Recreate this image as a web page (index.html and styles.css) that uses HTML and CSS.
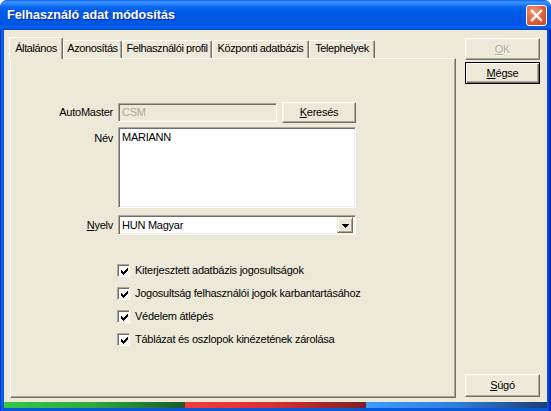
FILE: index.html
```html
<!DOCTYPE html>
<html>
<head>
<meta charset="utf-8">
<link rel="stylesheet" href="styles.css">
</head>
<body>
<div class="window">
  <div class="titlebar">
    <span class="title">Felhasználó adat módosítás</span>
    <div class="close">
      <svg width="19" height="19" viewBox="0 0 19 19"><path d="M5 5 L14 14 M14 5 L5 14" stroke="#fff" stroke-width="2.4" stroke-linecap="square" fill="none"/></svg>
    </div>
  </div>
  <div class="frame">
    <div class="client">
      <div class="main">
        <div class="tabs">
          <div class="tab active t1">Általános</div>
          <div class="tab t2">Azonosítás</div>
          <div class="tab t3">Felhasználói profil</div>
          <div class="tab t4">Központi adatbázis</div>
          <div class="tab t5">Telephelyek</div>
        </div>
        <div class="panel">
          <div class="form">
            <div class="lbl row1">AutoMaster</div>
            <div class="field1 row1">
              <div class="input sunken disabled">CSM</div>
              <div class="btn raised kbtn"><u>K</u>eresés</div>
            </div>
            <div class="lbl lbl-top row2">Név</div>
            <div class="textarea sunken row2">MARIANN</div>
            <div class="lbl row3"><u>N</u>yelv</div>
            <div class="combo sunken row3">
              <span class="combo-text">HUN Magyar</span>
              <div class="ddbtn">
                <svg width="7" height="4" viewBox="0 0 7 4"><path d="M0 0h7v1h-7z M1 1h5v1h-5z M2 2h3v1h-3z M3 3h1v1h-1z" fill="#000" shape-rendering="crispEdges"/></svg>
              </div>
            </div>
          </div>
          <div class="checks">
            <div class="check"><span class="cbox"><svg width="9" height="9" viewBox="0 0 9 9"><path d="M7 1h1v1h-1z M6 2h2v1h-2z M1 3h1v1h-1z M5 3h3v1h-3z M1 4h2v1h-2z M4 4h3v1h-3z M1 5h5v1h-5z M2 6h3v1h-3z M3 7h1v1h-1z" fill="#000" shape-rendering="crispEdges"/></svg></span><span>Kiterjesztett adatbázis jogosultságok</span></div>
            <div class="check"><span class="cbox"><svg width="9" height="9" viewBox="0 0 9 9"><path d="M7 1h1v1h-1z M6 2h2v1h-2z M1 3h1v1h-1z M5 3h3v1h-3z M1 4h2v1h-2z M4 4h3v1h-3z M1 5h5v1h-5z M2 6h3v1h-3z M3 7h1v1h-1z" fill="#000" shape-rendering="crispEdges"/></svg></span><span>Jogosultság felhasználói jogok karbantartásához</span></div>
            <div class="check"><span class="cbox"><svg width="9" height="9" viewBox="0 0 9 9"><path d="M7 1h1v1h-1z M6 2h2v1h-2z M1 3h1v1h-1z M5 3h3v1h-3z M1 4h2v1h-2z M4 4h3v1h-3z M1 5h5v1h-5z M2 6h3v1h-3z M3 7h1v1h-1z" fill="#000" shape-rendering="crispEdges"/></svg></span><span>Védelem átlépés</span></div>
            <div class="check"><span class="cbox"><svg width="9" height="9" viewBox="0 0 9 9"><path d="M7 1h1v1h-1z M6 2h2v1h-2z M1 3h1v1h-1z M5 3h3v1h-3z M1 4h2v1h-2z M4 4h3v1h-3z M1 5h5v1h-5z M2 6h3v1h-3z M3 7h1v1h-1z" fill="#000" shape-rendering="crispEdges"/></svg></span><span>Táblázat és oszlopok kinézetének zárolása</span></div>
          </div>
        </div>
      </div>
      <div class="side">
        <div class="btn raised sbtn disabled-btn"><u>O</u>K</div>
        <div class="btn default sbtn mbtn"><u>M</u>égse</div>
        <div class="spacer"></div>
        <div class="btn raised sbtn hbtn"><u>S</u>úgó</div>
      </div>
    </div>
    <div class="strip">
      <div class="seg green"></div>
      <div class="seg red"></div>
      <div class="seg blue"></div>
    </div>
  </div>
</div>
</body>
</html>
```
FILE: styles.css
```css
* { box-sizing: border-box; }
html, body { margin: 0; padding: 0; background: #fff; }
body {
  font-family: "Liberation Sans", Arial, sans-serif;
  font-size: 11px;
  line-height: 13px;
  letter-spacing: -0.25px;
  color: #000;
}
u { text-decoration: underline; text-underline-offset: 1px; }

.window {
  width: 551px;
  height: 411px;
  border-radius: 7px 7px 0 0;
  background: linear-gradient(to right, #0019CF 0, #0855DD 1px, #166AEE 2px, #0855DD 3px, #0855DD 548px, #0831D9 549px, #001EA0 551px);
  display: flex;
  flex-direction: column;
  overflow: hidden;
}

.titlebar {
  height: 30px;
  flex: none;
  display: flex;
  align-items: center;
  padding: 0 4px 0 7px;
  border-radius: 7px 7px 0 0;
  background: linear-gradient(to bottom, #0A5FEE 0px, #3D95FF 2px, #2B84FA 4px, #0767EE 7px, #005AE8 12px, #0056E2 20px, #0057E5 25px, #0A62EF 27px, #0046C8 30px);
}
.title {
  color: #fff;
  font-weight: bold;
  font-size: 12.6px;
  text-shadow: 1px 1px 0 #0A2C9C;
  letter-spacing: 0;
}
.close {
  margin-left: auto;
  width: 21px;
  height: 21px;
  border: 1px solid #fff;
  border-radius: 3px;
  background: radial-gradient(circle at 35% 30%, #F09A7E 0, #E2673F 45%, #C8421E 100%);
  display: flex;
  align-items: center;
  justify-content: center;
}
.close svg { display: block; }

.frame {
  margin: 0 4px;
  height: 381px;
  display: flex;
  flex-direction: column;
}
.client {
  height: 372px;
  flex: none;
  background: #ECE9D8;
  display: flex;
  padding: 7px 7px 4px 5px;
  gap: 9px;
}
.strip {
  height: 6px;
  flex: none;
  display: flex;
}
.seg { flex: 1; }
.green { background: linear-gradient(to right, #36C846, #2FA83D 50%, #1C5A29); }
.red { background: linear-gradient(to right, #F43C3C, #D83030 50%, #7C1F22); }
.blue { background: linear-gradient(to right, #3C9CFF, #2F7FD8 50%, #1E3C70); }

.main {
  width: 447px;
  display: flex;
  flex-direction: column;
}
.tabs {
  height: 21px;
  flex: none;
  display: flex;
  align-items: flex-end;
  letter-spacing: -0.4px;
}
.tab {
  height: 18px;
  border-top: 1px solid #fff;
  border-left: 1px solid #fff;
  border-right: 1px solid #716F64;
  box-shadow: inset -1px 0 0 #ACA899;
  border-radius: 2px 2px 0 0;
  padding-top: 1px;
  text-align: center;
  white-space: nowrap;
  background: #ECE9D8;
}
.tab.active {
  height: 22px;
  padding-top: 4px;
  margin-bottom: -1px;
  position: relative;
  z-index: 1;
}
.t1 { width: 54px; }
.t2 { width: 59px; }
.t3 { width: 90px; }
.t4 { width: 97px; }
.t5 { width: 66px; }

.panel {
  flex: 1;
  margin-left: 1px;
  width: 446px;
  border-top: 1px solid #fff;
  border-left: 1px solid #fff;
  border-right: 1px solid #716F64;
  border-bottom: 1px solid #716F64;
  box-shadow: inset -1px -1px 0 #ACA899;
  padding-top: 43px;
}

.form {
  display: grid;
  grid-template-columns: 102px 238px;
  column-gap: 5px;
}
.lbl {
  text-align: right;
  white-space: nowrap;
  display: flex;
  align-items: center;
  justify-content: flex-end;
}
.lbl-top { align-items: flex-start; padding-top: 5px; }
.row1 { height: 21px; }
.row2 { margin-top: 4px; }
.row3 { margin-top: 7px; }

.sunken {
  border: 1px solid;
  border-color: #ACA899 #FFFFFF #FFFFFF #ACA899;
  box-shadow: inset 1px 1px 0 #716F64, inset -1px -1px 0 #F1EFE2;
}
.raised {
  border: 1px solid;
  border-color: #FFFFFF #716F64 #716F64 #FFFFFF;
  box-shadow: inset -1px -1px 0 #ACA899, inset 1px 1px 0 #F1EFE2;
}

.field1 {
  display: flex;
  align-items: flex-start;
  gap: 5px;
}
.input {
  width: 159px;
  height: 19px;
  margin-top: 1px;
  padding: 2px 0 0 3px;
}
.disabled {
  background: #ECE9D8;
  color: #ACA899;
}
.btn {
  background: #ECE9D8;
  display: flex;
  align-items: center;
  justify-content: center;
  white-space: nowrap;
}
.kbtn { width: 74px; height: 21px; }

.textarea {
  height: 81px;
  background: #fff;
  padding: 3px 0 0 3px;
}
.combo {
  height: 20px;
  background: #fff;
  display: flex;
  align-items: center;
  padding: 2px;
}
.combo-text { flex: 1; padding-left: 1px; }
.ddbtn {
  width: 16px;
  height: 16px;
  background: #ECE9D8;
  border: 1px solid;
  border-color: #ECE9D8 #716F64 #716F64 #ECE9D8;
  box-shadow: inset 1px 1px 0 #fff, inset -1px -1px 0 #ACA899;
  display: flex;
  align-items: center;
  justify-content: center;
  padding-top: 1px;
}
.ddbtn svg { display: block; }

.checks {
  margin-top: 24px;
  padding-left: 106px;
}
.check {
  height: 23px;
  display: flex;
  align-items: center;
  gap: 5px;
  white-space: nowrap;
}
.cbox {
  width: 13px;
  height: 13px;
  flex: none;
  background: #fff;
  border: 1px solid;
  border-color: #ACA899 #FFFFFF #FFFFFF #ACA899;
  box-shadow: inset 1px 1px 0 #716F64, inset -1px -1px 0 #F1EFE2;
  display: flex;
  align-items: center;
  justify-content: center;
  padding: 1px 0 0 1px;
}
.cbox svg { display: block; }

.side {
  width: 75px;
  display: flex;
  flex-direction: column;
  padding-top: 1px;
  padding-bottom: 1px;
}
.sbtn { width: 75px; height: 22px; }
.disabled-btn { color: #ACA899; text-shadow: 1px 1px 0 #fff; }
.mbtn {
  margin-top: 2px;
  border: 1px solid #000;
  box-shadow: inset 1px 1px 0 #fff, inset -1px -1px 0 #716F64, inset -2px -2px 0 #ACA899;
}
.spacer { flex: 1; }
.hbtn { height: 23px; }
```
